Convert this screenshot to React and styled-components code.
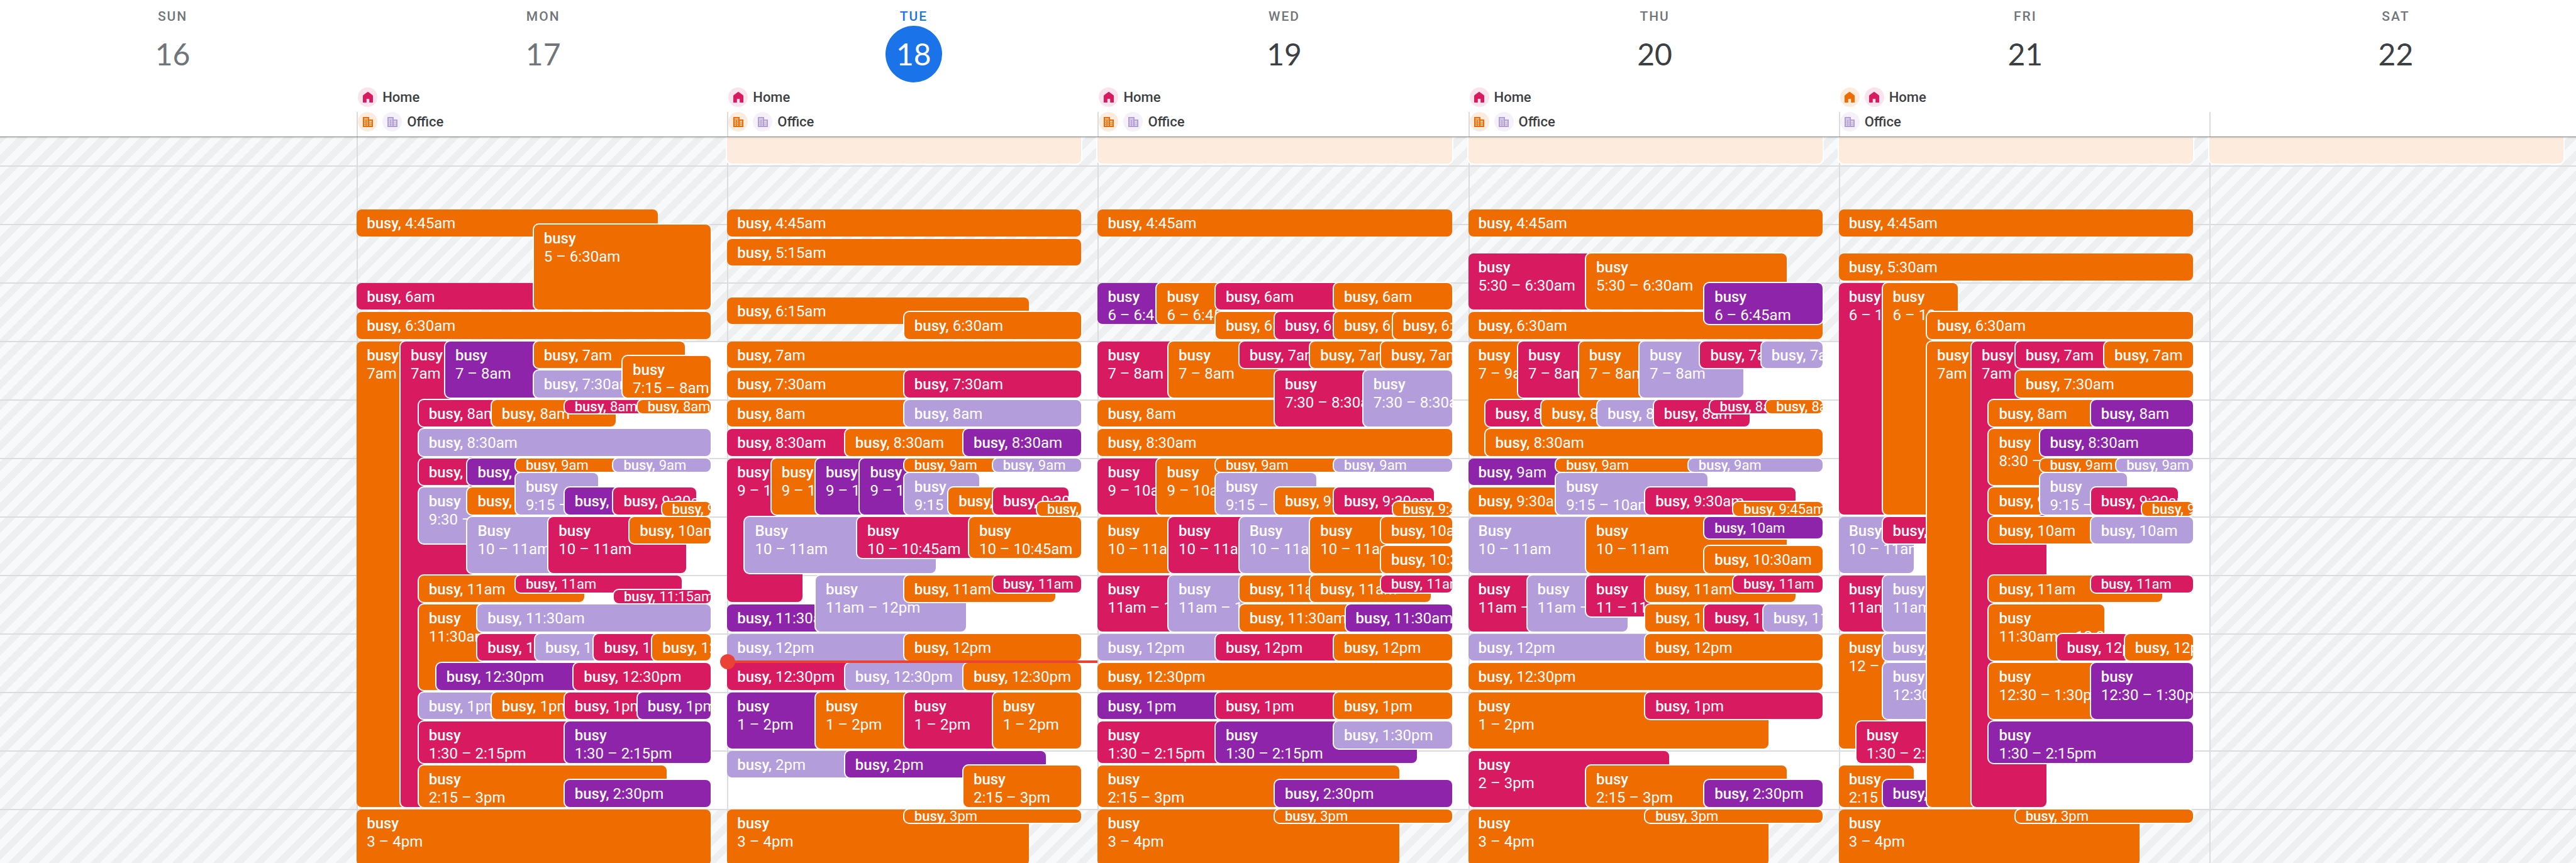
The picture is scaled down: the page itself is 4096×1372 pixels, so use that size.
import React from 'react';
import styled, { createGlobalStyle, css } from 'styled-components';

const HOUR = 93;
const FIRST_HOUR = 3.5;
const GRID_TOP = 47;

const palette = {
  O: '#ef6c00',
  P: '#d81b60',
  V: '#8e24aa',
  L: '#b39ddb',
  band: '#fdecde',
};

const tint = { O: '#fdecdd', P: '#fae3ec', L: '#f4f1fb' };

const GlobalStyle = createGlobalStyle`
  *, *::before, *::after { box-sizing: border-box; }
  body {
    margin: 0;
    background: #fff;
    color: #3c4043;
    font-family: Roboto, "Liberation Sans", sans-serif;
  }
`;

const Page = styled.main`
  display: flex;
  flex-direction: column;
  height: 100vh;
  overflow: hidden;
`;

const weekColumns = css`
  display: grid;
  grid-template-columns: repeat(7, minmax(0, 1fr));
  margin: 0 -6px 0 -22px;
`;

const WeekHeader = styled.header`
  ${weekColumns}
  flex: none;
  position: relative;
  z-index: 2;
  background: #fff;
  box-shadow: 0 1px 1px rgba(60, 64, 67, 0.5), 0 2px 3px rgba(60, 64, 67, 0.15);
`;

const HeaderDay = styled.div`
  display: flex;
  flex-direction: column;
  padding: 11px 0 8px 2px;
  background: ${(p) =>
    p.$edge ? 'none' : 'linear-gradient(#dadce0, #dadce0) left bottom / 2px 39px no-repeat'};
`;

const DayTitle = styled.h2`
  display: flex;
  flex-direction: column;
  align-items: center;
  margin: 0;
  padding-left: 2px;
  font-weight: 400;
`;

const dayColor = { past: '#70757a', today: '#1a73e8', future: '#3c4043' };

const DayName = styled.span`
  font-size: 21px;
  font-weight: 500;
  line-height: 30px;
  letter-spacing: 2px;
  color: ${(p) => (p.$when === 'today' ? '#1a73e8' : '#70757a')};
`;

const DayNumber = styled.button`
  width: 90px;
  height: 90px;
  padding: 0;
  border: 0;
  border-radius: 50%;
  font-family: Lato, "Open Sans", sans-serif;
  font-size: 48px;
  line-height: 88px;
  color: ${(p) => (p.$when === 'today' ? '#fff' : dayColor[p.$when])};
  background: ${(p) => (p.$when === 'today' ? '#1a73e8' : 'transparent')};
`;

const Places = styled.div`
  display: grid;
  gap: 8px;
  margin-top: 8px;
`;

const PlaceRow = styled.div`
  display: flex;
  align-items: center;
  gap: 8px;
  height: 31px;
  font-size: 22px;
  font-weight: 500;
  line-height: 31px;
  color: #3c4043;
`;

const Badge = styled.span`
  display: grid;
  place-items: center;
  width: 31px;
  height: 31px;
  border-radius: 50%;
  color: ${(p) => palette[p.$tone]};
  background: ${(p) => tint[p.$tone]};
`;

const WeekBody = styled.section`
  ${weekColumns}
  flex: 1;
  min-height: 0;
`;

const hourLines = `repeating-linear-gradient(#dadce0 0 2px, transparent 2px ${HOUR}px)`;
const hatch = 'repeating-linear-gradient(135deg, #f8f9fa 0 12px, #edeff1 12px 23px)';

const DayColumn = styled.div`
  border-left: 2px solid #dadce0;
  background-color: #fff;
  background-image: ${hourLines}, ${(p) =>
      p.$off ? 'none' : 'linear-gradient(transparent 325px, #fff 325px 1070px, transparent 1070px)'},
    ${hatch};
  background-position: 0 ${46 - HOUR}px, 0 0, 0 0;
  background-size: auto calc(100% + ${HOUR}px), auto, auto;
  background-repeat: no-repeat;
`;

const Events = styled.div`
  position: relative;
  height: 100%;
  margin: 0 26px 0 -2px;
`;

const EventBox = styled.button`
  position: absolute;
  display: flex;
  flex-direction: ${(p) => (p.$kind === 'block' ? 'column' : 'row')};
  align-items: ${(p) => (p.$kind === 'small' ? 'center' : 'flex-start')};
  justify-content: flex-start;
  gap: ${(p) => (p.$kind === 'block' ? 0 : 6)}px;
  margin: 0;
  padding: ${(p) => (p.$kind === 'small' ? '0 0 0 16px' : '8px 0 0 16px')};
  overflow: hidden;
  border: 0;
  border-radius: 8px;
  box-shadow: ${(p) => (p.$ring ? '0 0 0 2px #fff' : 'none')};
  background: ${(p) => palette[p.$tone]};
  color: #fff;
  font-family: inherit;
  font-size: ${(p) => (p.$kind === 'small' ? 22 : 24)}px;
  line-height: ${(p) => (p.$kind === 'small' ? 21 : 29)}px;
  text-align: left;
  white-space: nowrap;
`;

const EventTitle = styled.span`
  flex: none;
  font-weight: 500;
`;

const EventTime = styled.span`
  flex: none;
`;

const NowLine = styled.div`
  position: absolute;
  left: 0;
  right: -26px;
  height: 4px;
  background: #ea4335;

  &::before {
    content: '';
    position: absolute;
    left: -11px;
    top: -10px;
    width: 24px;
    height: 24px;
    border-radius: 50%;
    background: #ea4335;
  }
`;

const HomeIcon = () => (
  <svg width="16" height="17" viewBox="0 0 16 17" fill="currentColor" aria-hidden="true">
    <path d="M8 0 9 .4 15.4 5.2 16 6.4V17H10.2V11.2H5.8V17H0V6.4L.6 5.2 7 .4Z" />
  </svg>
);

const OfficeIcon = () => (
  <svg width="16" height="16" viewBox="0 0 16 16" fill="currentColor" aria-hidden="true">
    <path
      fillRule="evenodd"
      d="M0 0H10V4H16V16H0ZM2 2.4V4H8V2.4ZM2 5.6V7.2H4.4V5.6ZM5.8 5.6V7.2H8V5.6ZM2 8.8V10.4H4.4V8.8ZM5.8 8.8V10.4H8V8.8ZM2 12V13.6H4.4V12ZM5.8 12V13.6H8V12ZM10 6V7.4H14V6ZM10 8.8V10.4H14V8.8ZM10 12V13.6H14V12Z"
    />
  </svg>
);

const home = (...tones) => ({ label: 'Home', tones, Icon: HomeIcon });
const office = (...tones) => ({ label: 'Office', tones, Icon: OfficeIcon });

// Event: [start hour, minutes, left %, right %, tone, options]
const band = [3, 60, 0, 100, 'band'];

const monday = [
  [4.75, 30, 0, 85, 'O'], [5, 90, 50, 100, 'O'], [6, 30, 0, 60, 'P'], [6.5, 30, 0, 100, 'O'],
  [7, 480, 0, 20, 'O', { time: '7am' }], [7, 480, 12.4, 33, 'P', { time: '7am' }],
  [7, 60, 25, 52, 'V'], [7, 30, 50, 92.6, 'O'], [7.5, 30, 50, 80, 'L'], [7.25, 45, 75.1, 100, 'O'],
  [8, 30, 17.5, 42, 'P'], [8, 30, 38.1, 73.1, 'O'], [8, 15, 58.7, 81, 'P'], [8, 15, 79.3, 100, 'O'],
  [8.5, 30, 17.5, 100, 'L'],
  [9, 30, 17.5, 33, 'P'], [9, 30, 31.3, 47, 'V'], [9, 15, 44.9, 74, 'O'], [9, 15, 72.5, 100, 'L'],
  [9.5, 60, 17.5, 33, 'L'], [9.5, 30, 31.3, 46, 'O'], [9.25, 45, 44.9, 68.2, 'L'],
  [9.5, 30, 58.7, 74, 'V'], [9.5, 30, 72.5, 95.8, 'P'], [9.75, 15, 86.2, 100, 'O'],
  [10, 60, 31.3, 56, 'L', { title: 'Busy' }], [10, 60, 54.2, 93.1, 'P'], [10, 30, 77.1, 100, 'O'],
  [11, 30, 17.5, 64.2, 'O'], [11, 20, 44.9, 91.7, 'P'], [11.25, 15, 72.6, 100, 'P'],
  [11.5, 90, 17.5, 36, 'O'], [11.5, 30, 34.1, 100, 'L'],
  [12, 30, 34.1, 52, 'P'], [12, 30, 50.4, 68, 'L'], [12, 30, 67, 85, 'P'], [12, 30, 83.5, 100, 'O'],
  [12.5, 30, 22.5, 63, 'V'], [12.5, 30, 61.3, 100, 'P'],
  [13, 30, 17.5, 40, 'L'], [13, 30, 38.1, 61, 'O'], [13, 30, 58.7, 81, 'P'], [13, 30, 79.3, 100, 'V'],
  [13.5, 45, 17.5, 61, 'P'], [13.5, 45, 58.7, 100, 'V'],
  [14.25, 45, 17.5, 87.6, 'O'], [14.5, 30, 58.7, 100, 'V'],
  [15, 60, 0, 100, 'O'],
];

const tuesday = [
  band,
  [4.75, 30, 0, 100, 'O'], [5.25, 30, 0, 100, 'O'],
  [6.25, 30, 0, 85.1, 'O'], [6.5, 30, 50, 100, 'O'],
  [7, 30, 0, 100, 'O'], [7.5, 30, 0, 52, 'O'], [7.5, 30, 50, 100, 'P'],
  [8, 30, 0, 52, 'O'], [8, 30, 50, 100, 'L'],
  [8.5, 30, 0, 36, 'P'], [8.5, 30, 33.3, 69, 'O'], [8.5, 30, 66.7, 100, 'V'],
  [9, 150, 0, 21.3, 'P'], [9, 60, 12.5, 28, 'O'], [9, 60, 25, 40, 'V'], [9, 60, 37.5, 52, 'V'],
  [9, 15, 50, 77, 'O'], [9, 15, 75, 100, 'L'],
  [9.25, 45, 50, 71.2, 'L'], [9.5, 30, 62.5, 77, 'O'], [9.5, 30, 75, 96.3, 'P'], [9.75, 15, 87.5, 100, 'O'],
  [10, 60, 5, 58.9, 'L', { title: 'Busy' }], [10, 45, 36.7, 70, 'P'], [10, 45, 68.3, 100, 'O'],
  [11, 60, 25, 67.5, 'L'], [11, 30, 50, 92.6, 'O'], [11, 20, 75, 100, 'P'], [11.5, 30, 0, 27, 'V'],
  [12, 30, 0, 52, 'L'], [12, 30, 50, 100, 'O'],
  [12.5, 30, 0, 36, 'P'], [12.5, 30, 33.3, 69, 'L'], [12.5, 30, 66.7, 100, 'O'],
  [13, 60, 0, 27, 'V'], [13, 60, 25, 52, 'O'], [13, 60, 50, 77, 'P'], [13, 60, 75, 100, 'O'],
  [14, 30, 0, 36, 'L'], [14, 30, 33.3, 90, 'V'], [14.25, 45, 66.7, 100, 'O'],
  [15, 60, 0, 85.1, 'O'], [15, 15, 50, 100, 'O'],
];

const wednesday = [
  band,
  [4.75, 30, 0, 100, 'O'],
  [6, 45, 0, 19, 'V'], [6, 45, 16.7, 36, 'O'], [6, 30, 33.3, 69, 'P'], [6, 30, 66.7, 100, 'O'],
  [6.5, 30, 33.3, 52, 'O'], [6.5, 30, 50, 69, 'P'], [6.5, 30, 66.7, 85, 'O'], [6.5, 30, 83.3, 100, 'O'],
  [7, 60, 0, 22, 'P'], [7, 60, 20, 52, 'O'], [7, 30, 40, 62, 'P'], [7, 30, 60, 82, 'O'], [7, 30, 80, 100, 'O'],
  [7.5, 60, 50, 77, 'P'], [7.5, 60, 75, 100, 'L'],
  [8, 30, 0, 52, 'O'], [8.5, 30, 0, 100, 'O'],
  [9, 60, 0, 19, 'P'], [9, 60, 16.7, 36, 'O'], [9, 15, 33.3, 69, 'O'], [9, 15, 66.7, 100, 'L'],
  [9.25, 45, 33.3, 61.7, 'L'], [9.5, 30, 50, 69, 'O'], [9.5, 30, 66.7, 95, 'P'], [9.75, 15, 83.3, 100, 'O'],
  [10, 60, 0, 22, 'O'], [10, 60, 20, 42, 'P'], [10, 60, 40, 62, 'L', { title: 'Busy' }],
  [10, 60, 60, 83, 'O'], [10, 30, 80, 100, 'O'], [10.5, 30, 80, 100, 'O'],
  [11, 60, 0, 22, 'P'], [11, 60, 20, 42, 'L'], [11, 30, 40, 62, 'O'], [11, 30, 60, 94, 'O'], [11, 20, 80, 100, 'P'],
  [11.5, 30, 40, 72, 'O'], [11.5, 30, 70, 100, 'V'],
  [12, 30, 0, 36, 'L'], [12, 30, 33.3, 69, 'P'], [12, 30, 66.7, 100, 'O'],
  [12.5, 30, 0, 100, 'O'],
  [13, 30, 0, 36, 'V'], [13, 30, 33.3, 69, 'P'], [13, 30, 66.7, 100, 'O'],
  [13.5, 45, 0, 36, 'P'], [13.5, 45, 33.3, 90.1, 'V'], [13.5, 30, 66.7, 100, 'L'],
  [14.25, 45, 0, 85.1, 'O'], [14.5, 30, 50, 100, 'V'],
  [15, 60, 0, 85.1, 'O'], [15, 15, 50, 100, 'O'],
];

const thursday = [
  band,
  [4.75, 30, 0, 100, 'O'],
  [5.5, 60, 0, 36, 'P'], [5.5, 60, 33.3, 89.9, 'O'], [6, 45, 66.7, 100, 'V'], [6.5, 30, 0, 100, 'O'],
  [7, 120, 0, 18, 'O'], [7, 60, 14.1, 33, 'P'], [7, 60, 31.3, 50, 'O'], [7, 60, 48.4, 77.6, 'L'],
  [7, 30, 65.5, 84, 'P'], [7, 30, 82.8, 100, 'L'],
  [8, 30, 4.8, 23, 'P'], [8, 30, 20.7, 39, 'O'], [8, 30, 36.5, 55, 'L'], [8, 30, 52.4, 79.4, 'P'],
  [8, 15, 68.2, 86, 'P'], [8, 15, 84.1, 100, 'O'],
  [8.5, 30, 4.8, 100, 'O'],
  [9, 30, 0, 27, 'V'], [9, 15, 24.8, 64, 'O'], [9, 15, 62.2, 100, 'L'],
  [9.25, 45, 24.8, 67.5, 'L'], [9.5, 30, 0, 27, 'O'], [9.5, 30, 50, 92.5, 'P'], [9.75, 15, 74.9, 100, 'O'],
  [10, 60, 0, 36, 'L', { title: 'Busy' }], [10, 60, 33.3, 89.9, 'O'], [10, 25, 66.7, 100, 'V'], [10.5, 30, 66.7, 100, 'O'],
  [11, 60, 0, 19, 'P'], [11, 60, 16.7, 45, 'L'], [11, 45, 33.3, 52, 'P'], [11, 30, 50, 92.5, 'O'], [11, 20, 74.9, 100, 'P'],
  [11.5, 30, 50, 69, 'O'], [11.5, 30, 66.7, 85, 'P'], [11.5, 30, 83.3, 100, 'L'],
  [12, 30, 0, 52, 'L'], [12, 30, 50, 100, 'O'],
  [12.5, 30, 0, 100, 'O'],
  [13, 60, 0, 84.8, 'O'], [13, 30, 50, 100, 'P'],
  [14, 60, 0, 56.7, 'P'], [14.25, 45, 33.3, 89.9, 'O'], [14.5, 30, 66.7, 100, 'V'],
  [15, 60, 0, 84.8, 'O'], [15, 15, 50, 100, 'O'],
];

const friday = [
  band,
  [4.75, 30, 0, 100, 'O'], [5.5, 30, 0, 100, 'O'],
  [6, 240, 0, 15, 'P'], [6, 240, 12.4, 33.7, 'O'], [6.5, 30, 24.9, 100, 'O'],
  [7, 480, 24.9, 40, 'O', { time: '7am' }], [7, 480, 37.5, 58.6, 'P', { time: '7am' }],
  [7, 30, 49.9, 77, 'P'], [7, 30, 75, 100, 'O'], [7.5, 30, 49.9, 100, 'O'],
  [8, 30, 42.4, 73, 'O'], [8, 30, 71.2, 100, 'V'],
  [8.5, 60, 42.4, 59, 'O'], [8.5, 30, 56.8, 100, 'V'],
  [9, 15, 56.8, 80, 'O'], [9, 15, 78.4, 100, 'L'],
  [9.25, 45, 56.8, 81.3, 'L'], [9.5, 30, 42.4, 58, 'O'], [9.5, 30, 71.2, 95.7, 'P'], [9.75, 15, 85.6, 100, 'O'],
  [10, 30, 42.4, 73, 'O'], [10, 30, 71.2, 100, 'L'],
  [10, 60, 0, 21.2, 'L', { title: 'Busy' }], [10, 30, 12.4, 30, 'P'],
  [11, 60, 0, 15, 'P'], [11, 60, 12.4, 28, 'L'],
  [11, 30, 42.4, 91.4, 'O'], [11, 20, 71.2, 100, 'P'],
  [11.5, 60, 42.4, 75, 'O'], [12, 30, 61.6, 82, 'P'], [12, 30, 80.8, 100, 'O'],
  [12, 120, 0, 15, 'O'], [12, 30, 12.4, 28, 'L'], [12.5, 60, 12.4, 28, 'L'],
  [12.5, 60, 42.4, 73, 'O'], [12.5, 60, 71.2, 100, 'V'],
  [13.5, 45, 5, 30, 'P'], [13.5, 45, 42.4, 100, 'V'],
  [14.25, 45, 0, 21.2, 'O'], [14.5, 30, 12.4, 28, 'V'],
  [15, 60, 0, 85, 'O'], [15, 15, 49.9, 100, 'O'],
];

const days = [
  { name: 'SUN', number: 16, when: 'past', off: true, edge: true, places: [], events: [] },
  { name: 'MON', number: 17, when: 'past', places: [home('P'), office('O', 'L')], events: monday },
  { name: 'TUE', number: 18, when: 'today', places: [home('P'), office('O', 'L')], events: tuesday, now: 12.473 },
  { name: 'WED', number: 19, when: 'future', places: [home('P'), office('O', 'L')], events: wednesday },
  { name: 'THU', number: 20, when: 'future', places: [home('P'), office('O', 'L')], events: thursday },
  { name: 'FRI', number: 21, when: 'future', places: [home('O', 'P'), office('L')], events: friday },
  { name: 'SAT', number: 22, when: 'future', off: true, places: [], events: [band] },
];

const yOf = (hour) => GRID_TOP + (hour - 4) * HOUR;

function clock(hour, withSuffix) {
  const h = Math.floor(hour);
  const m = Math.round((hour - h) * 60);
  const base = `${h > 12 ? h - 12 : h}${m ? `:${String(m).padStart(2, '0')}` : ''}`;
  return withSuffix ? base + (h < 12 ? 'am' : 'pm') : base;
}

function range(start, end) {
  const sameHalf = start < 12 === end < 12;
  return `${clock(start, !sameHalf)} – ${clock(end, true)}`;
}

function kindOf(minutes) {
  if (minutes >= 45) return 'block';
  return minutes >= 30 ? 'line' : 'small';
}

function CalendarEvent({ data }) {
  const [start, minutes, left, right, tone, options = {}] = data;
  const isBand = tone === 'band';
  const kind = kindOf(minutes);
  const title = options.title || 'busy';
  const from = Math.max(start, FIRST_HOUR);
  const top = isBand ? -10 : Math.floor(yOf(from));
  const gap = minutes === 15 ? 2 : 4;
  const bottom = Math.round(yOf(start + minutes / 60) - gap - 0.5);
  const place = { top, height: bottom - top, left: `${left}%`, width: `${right - left}%` };

  if (isBand) {
    return <EventBox type="button" aria-label="All day" $tone="band" $ring $kind="line" style={place} />;
  }
  return (
    <EventBox type="button" $tone={tone} $ring={left > 0} $kind={kind} style={place}>
      <EventTitle>{kind === 'block' ? title : `${title},`}</EventTitle>
      <EventTime>
        {options.time || (kind === 'block' ? range(start, start + minutes / 60) : clock(start, true))}
      </EventTime>
    </EventBox>
  );
}

export default function App() {
  return (
    <Page>
      <GlobalStyle />
      <WeekHeader>
        {days.map((day) => (
          <HeaderDay key={day.name} $edge={day.edge}>
            <DayTitle>
              <DayName $when={day.when}>{day.name}</DayName>
              <DayNumber type="button" $when={day.when}>{day.number}</DayNumber>
            </DayTitle>
            <Places>
              {day.places.map(({ label, tones, Icon }) => (
                <PlaceRow key={label}>
                  {tones.map((tone) => (
                    <Badge key={tone} $tone={tone}><Icon /></Badge>
                  ))}
                  <span>{label}</span>
                </PlaceRow>
              ))}
            </Places>
          </HeaderDay>
        ))}
      </WeekHeader>
      <WeekBody>
        {days.map((day) => (
          <DayColumn key={day.name} $off={day.off}>
            <Events>
              {[...day.events]
                .sort((a, b) => a[2] - b[2])
                .map((event, i) => <CalendarEvent key={i} data={event} />)}
              {day.now && <NowLine style={{ top: Math.round(yOf(day.now)) - 2 }} />}
            </Events>
          </DayColumn>
        ))}
      </WeekBody>
    </Page>
  );
}
